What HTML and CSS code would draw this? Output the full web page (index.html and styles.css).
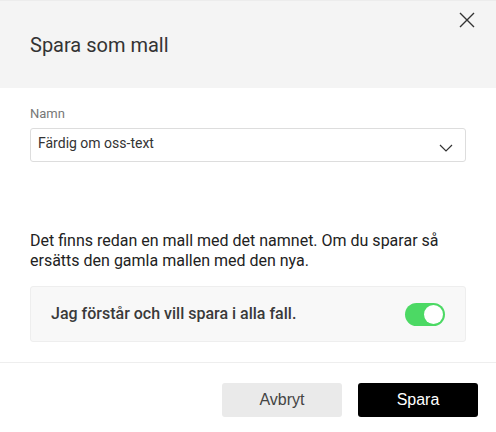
FILE: index.html
```html
<!DOCTYPE html>
<html lang="sv">
<head>
<meta charset="utf-8">
<link rel="stylesheet" href="styles.css">
</head>
<body>
<div class="dialog">
  <header class="head">
    <h1 class="title">Spara som mall</h1>
    <button class="close" aria-label="Stäng">
      <svg width="16" height="16" viewBox="0 0 16 16"><path d="M1 1L15 15M15 1L1 15" stroke="#333" stroke-width="1.4" fill="none"/></svg>
    </button>
  </header>
  <main class="body">
    <label class="label">Namn</label>
    <div class="select">
      <span class="select-text">Färdig om oss-text</span>
      <svg class="chev" width="14" height="8" viewBox="0 0 14 8"><path d="M1 1L7 7L13 1" stroke="#333" stroke-width="1.2" fill="none"/></svg>
    </div>
    <p class="warn">Det finns redan en mall med det namnet. Om du sparar så ersätts den gamla mallen med den nya.</p>
    <div class="confirm">
      <span class="confirm-text">Jag förstår och vill spara i alla fall.</span>
      <span class="toggle"><span class="knob"></span></span>
    </div>
  </main>
  <footer class="foot">
    <button class="btn btn-cancel">Avbryt</button>
    <button class="btn btn-save">Spara</button>
  </footer>
</div>
</body>
</html>
```
FILE: styles.css
```css
html, body { margin: 0; padding: 0; background: #fff; }
body { font-family: Roboto, "Liberation Sans", sans-serif; color: #222; }
.dialog { width: 496px; height: 432px; display: flex; flex-direction: column; }
.head {
  height: 87px; background: #f4f4f4; border-top: 1px solid #ececec;
  display: flex; align-items: center; padding: 0 30px; position: relative;
}
.title { margin: 0; font-size: 20px; font-weight: 400; color: #333; }
.close {
  position: absolute; top: 11px; right: 21px; width: 16px; height: 16px;
  padding: 0; border: 0; background: none; display: flex;
}
.body { padding: 19px 30px 20px; display: flex; flex-direction: column; border-bottom: 1px solid #eee; }
.label { font-size: 13px; color: #777; line-height: 14px; margin-bottom: 7px; }
.select {
  height: 32px; border: 1px solid #ddd; border-radius: 3px; display: flex; align-items: center;
  justify-content: space-between; padding: 0 12px 0 7px; margin-top: 0;
}
.select-text { font-size: 14px; color: #333; margin-top: -4px; }
.chev { margin-top: 6px; }
.warn { margin: 69px 0 15px; font-size: 16px; line-height: 20px; color: #222; }
.confirm {
  height: 54px; background: #f8f8f8; border: 1px solid #eee; border-radius: 3px;
  display: flex; align-items: center; justify-content: space-between; padding: 0 20px;
}
.confirm-text { font-size: 16px; font-weight: 500; color: #3a3a3a; margin-top: -2px; }
.toggle {
  width: 40px; height: 23px; border-radius: 12px; background: #4cd964; position: relative; display: block;
}
.knob {
  position: absolute; right: 2px; top: 2px; width: 19px; height: 19px; border-radius: 50%; background: #fff;
}
.foot { display: flex; justify-content: flex-end; gap: 16px; padding: 20px 18px 0; }
.btn {
  width: 120px; height: 34px; border: 0; border-radius: 3px; font-family: "Liberation Sans", Arial, sans-serif;
  font-size: 16px; padding: 0;
}
.btn-cancel { background: #eaeaea; color: #444; }
.btn-save { background: #000; color: #fff; }
```
